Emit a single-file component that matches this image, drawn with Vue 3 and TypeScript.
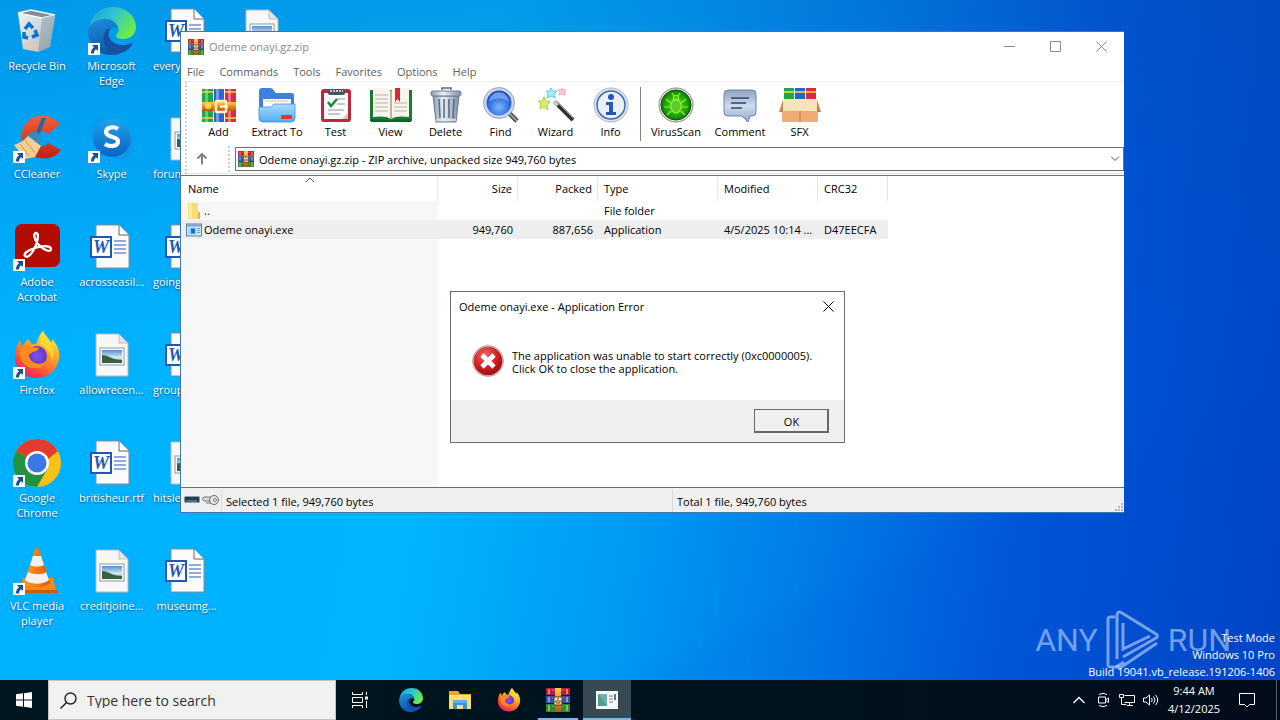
<script setup lang="ts">
import { ref } from 'vue'

interface Shortcut {
  icon: string
  label: string
  linked?: boolean
  left?: boolean
}

interface Tool {
  icon: string
  label: string
  size?: string
}

const shortcuts: Shortcut[][] = [
  [
    { icon: 'bin', label: 'Recycle Bin' },
    { icon: 'ccleaner', label: 'CCleaner', linked: true },
    { icon: 'acrobat', label: 'Adobe Acrobat', linked: true },
    { icon: 'firefox', label: 'Firefox', linked: true },
    { icon: 'chrome', label: 'Google Chrome', linked: true },
    { icon: 'vlc', label: 'VLC media player', linked: true },
  ],
  [
    { icon: 'edge', label: 'Microsoft Edge', linked: true },
    { icon: 'skype', label: 'Skype', linked: true },
    { icon: 'word', label: 'acrosseasil...' },
    { icon: 'photo', label: 'allowrecen...' },
    { icon: 'word', label: 'britisheur.rtf' },
    { icon: 'photo', label: 'creditjoine...' },
  ],
  [
    { icon: 'word', label: 'every...', left: true },
    { icon: 'photo', label: 'forum...', left: true },
    { icon: 'word', label: 'going...', left: true },
    { icon: 'word', label: 'group...', left: true },
    { icon: 'photo', label: 'hitsle...', left: true },
    { icon: 'word', label: 'museumg...' },
  ],
  [{ icon: 'photo', label: '' }],
]

const menus = ['File', 'Commands', 'Tools', 'Favorites', 'Options', 'Help']

const mainTools: Tool[] = [
  { icon: 'add', label: 'Add' },
  { icon: 'extract', label: 'Extract To', size: 'mid' },
  { icon: 'test', label: 'Test' },
  { icon: 'view', label: 'View' },
  { icon: 'delete', label: 'Delete' },
  { icon: 'find', label: 'Find' },
  { icon: 'wizard', label: 'Wizard' },
  { icon: 'info', label: 'Info' },
]

const extraTools: Tool[] = [
  { icon: 'virus', label: 'VirusScan', size: 'wide' },
  { icon: 'comment', label: 'Comment', size: 'wide' },
  { icon: 'sfx', label: 'SFX' },
]

const pinned = [
  { icon: 'edge', label: 'Microsoft Edge', state: '' },
  { icon: 'explorer', label: 'File Explorer', state: '' },
  { icon: 'firefox', label: 'Firefox', state: '' },
  { icon: 'rar', label: 'WinRAR', state: 'running' },
  { icon: 'appwin', label: 'Application Error', state: 'active' },
]

const address = ref('Odeme onayi.gz.zip - ZIP archive, unpacked size 949,760 bytes')
const query = ref('')
const errorOpen = ref(true)
</script>

<template>
  <div class="screen">
    <svg class="sprite" aria-hidden="true">
      <defs>
        <linearGradient id="gEdgeTop" x1="0" y1="0" x2="1" y2="0.5">
          <stop offset="0" stop-color="#1b9de2" /><stop offset="0.5" stop-color="#2fc3cf" /><stop offset="1" stop-color="#6bea4d" />
        </linearGradient>
        <linearGradient id="gEdgeLeft" x1="0" y1="0" x2="0.3" y2="1">
          <stop offset="0" stop-color="#1e8fe0" /><stop offset="1" stop-color="#0c59a4" />
        </linearGradient>
        <linearGradient id="gFire" x1="0.8" y1="0" x2="0.2" y2="1">
          <stop offset="0" stop-color="#fff14f" /><stop offset="0.4" stop-color="#ffa028" /><stop offset="0.75" stop-color="#ff4b3a" /><stop offset="1" stop-color="#e31587" />
        </linearGradient>
        <radialGradient id="gFireCore">
          <stop offset="0" stop-color="#8b4df0" /><stop offset="1" stop-color="#5a3cc0" />
        </radialGradient>
        <linearGradient id="gBin" x1="0" y1="0" x2="1" y2="1">
          <stop offset="0" stop-color="#eef3f6" /><stop offset="0.6" stop-color="#c6cfd5" /><stop offset="1" stop-color="#9faab2" />
        </linearGradient>
        <linearGradient id="gSkype" x1="0" y1="0" x2="0" y2="1">
          <stop offset="0" stop-color="#1fa3ea" /><stop offset="1" stop-color="#0a63c6" />
        </linearGradient>
        <linearGradient id="gCc" x1="0" y1="0" x2="0" y2="1">
          <stop offset="0" stop-color="#f2603c" /><stop offset="1" stop-color="#c3200f" />
        </linearGradient>
        <linearGradient id="gSky" x1="0" y1="0" x2="0" y2="1">
          <stop offset="0" stop-color="#4f8fd6" /><stop offset="0.6" stop-color="#d8ecf7" /><stop offset="1" stop-color="#2f6d6a" />
        </linearGradient>
        <linearGradient id="gGold" x1="0" y1="0" x2="0" y2="1">
          <stop offset="0" stop-color="#ffd24a" /><stop offset="0.5" stop-color="#e88a1c" /><stop offset="1" stop-color="#b9560c" />
        </linearGradient>
        <linearGradient id="gFolder" x1="0" y1="0" x2="0" y2="1">
          <stop offset="0" stop-color="#a9dcff" /><stop offset="1" stop-color="#52acf2" />
        </linearGradient>
        <linearGradient id="gSteel" x1="0" y1="0" x2="1" y2="0">
          <stop offset="0" stop-color="#8797ab" /><stop offset="0.4" stop-color="#edf2f7" /><stop offset="1" stop-color="#7b8ca2" />
        </linearGradient>
        <radialGradient id="gLens" cx="0.5" cy="0.65" r="0.6">
          <stop offset="0" stop-color="#7db4ff" /><stop offset="0.6" stop-color="#3470e0" /><stop offset="1" stop-color="#1a45b8" />
        </radialGradient>
        <radialGradient id="gVirus">
          <stop offset="0" stop-color="#5fe000" /><stop offset="0.6" stop-color="#2bb00d" /><stop offset="1" stop-color="#0f7a08" />
        </radialGradient>
        <linearGradient id="gBubble" x1="0" y1="0" x2="0" y2="1">
          <stop offset="0" stop-color="#8ea3c6" /><stop offset="0.5" stop-color="#cfdbee" /><stop offset="1" stop-color="#95a9cc" />
        </linearGradient>
        <radialGradient id="gError" cx="0.4" cy="0.3" r="0.8">
          <stop offset="0" stop-color="#ee6a66" /><stop offset="0.6" stop-color="#c8191c" /><stop offset="1" stop-color="#8e0b10" />
        </radialGradient>
        <linearGradient id="gCone" x1="0" y1="0" x2="1" y2="0">
          <stop offset="0" stop-color="#ff9a2e" /><stop offset="0.5" stop-color="#f47b0c" /><stop offset="1" stop-color="#d65b00" />
        </linearGradient>
      </defs>

      <symbol id="bin" viewBox="0 0 48 48">
        <path d="M5 6 42 9 37 40 25 45 10 42Z" fill="url(#gBin)" />
        <path d="M5 6 18 3 42 8 29 11Z" fill="#7f8d97" stroke="#f4f8fa" stroke-width="1.4" />
        <path d="M29 11 42 8 37 40 25 45Z" fill="#8797a3" opacity=".5" />
        <path d="M11 36 25 37 25 44 11 41Z" fill="#e5c9b8" opacity=".7" />
        <g fill="none" stroke="#1274c4" stroke-width="3.6"><path d="M12 22l4-5 4 4" /><path d="M22 23l2 5-5 2" /><path d="M15 31l-4-1v-5" /></g>
      </symbol>
      <symbol id="edge" viewBox="0 0 48 48">
        <path d="M1 22C2 9 12 0 25 0c14 0 23 10 23 20 0 8-6 12-13 12-5 0-8-2-7-4 3-3 3-5 2-8-2-6-8-9-15-8C8 13 3 17 1 22Z" fill="url(#gEdgeTop)" />
        <path d="M0 24c1-7 8-12 16-12 8 0 13 5 14 10-2-2-5-2-7-1-6 4-6 14 0 20 3 3 6 5 9 6-3 1-6 1-9 1C9 48 0 37 0 24Z" fill="url(#gEdgeLeft)" />
        <path d="M18 23c-5 8-2 19 7 23 8 2 15-2 19-8 1-2 0-2-1-2-5 3-13 3-18-1-5-4-6-9-2-14-2 0-4 1-5 2Z" fill="#1750a3" />
      </symbol>
      <symbol id="ccleaner" viewBox="0 0 48 48">
        <path d="M47 9C36-4 14-2 9 16c-4 17 12 30 26 27 6-1 10-4 13-8l-13-7c-3 5-10 4-12-1-3-8 6-15 12-8Z" fill="url(#gCc)" />
        <path d="M29 3h4l-8 20-4-1Z" fill="#1e68a6" />
        <path d="M12 23c4-7 10-8 15-4l1 8-8 3Z" fill="#3c88bd" />
        <path d="M15 21 28 31 22 42 12 44 1 30c6-2 11-5 14-9Z" fill="#f2cf92" />
        <path d="M12 25 22 38M7 29l9 12" stroke="#c99450" stroke-width="1" />
      </symbol>
      <symbol id="acrobat" viewBox="0 0 48 48">
        <rect x="2" y="1" width="45" height="43" rx="7" fill="#b30b00" />
        <path d="M12 33c-2-2 3-6 10-8 9-3 16-2 16 1 0 4-8 1-13-5-4-5-5-11-2-11 4 0 1 12-3 18-3 5-6 7-8 5Z" fill="none" stroke="#fff" stroke-width="2.3" />
      </symbol>
      <symbol id="firefox" viewBox="0 0 48 48">
        <path d="M30 0c2 5 6 8 8 12 1-1 1-3 1-4 6 6 8 13 7 20-2 11-11 19-22 19C11 47 2 38 2 26 2 18 4 14 7 9l2 6 6-7 4 5h4c2-5 3-9 7-13Z" fill="url(#gFire)" />
        <circle cx="24" cy="25" r="10" fill="url(#gFireCore)" />
        <path d="M7 18c4-4 9-4 12-2 3 1 5 0 7 1-1 4-8 3-10 7 0 8 12 13 19 4-1 11-20 13-26 2-2-4-3-8-2-12Z" fill="#ff8a1d" />
        <path d="M30 0c2 5 15 13 9 29-1-8-6-13-12-16 0-5 1-9 3-13Z" fill="#ffe12f" opacity=".75" />
      </symbol>
      <symbol id="chrome" viewBox="0 0 48 48">
        <circle cx="24" cy="24" r="24" fill="#fbc116" />
        <path d="M24 24 3.2 12A24 24 0 0 1 44.8 12Z" fill="#e33b2e" />
        <path d="M24 24 3.2 12A24 24 0 0 0 24 48L35 29Z" fill="#229342" />
        <path d="M24 12H45L35 20Z" fill="#e33b2e" />
        <circle cx="24" cy="24" r="12" fill="#fff" /><circle cx="24" cy="24" r="9.5" fill="#3b78e7" />
      </symbol>
      <symbol id="vlc" viewBox="0 0 48 48">
        <path d="M10 31h30l4 15H5Z" fill="#f5881a" /><path d="M5 43h39l1 3H4Z" fill="#c95d05" />
        <path d="M22 2q2-2 4 0l11 34c-6 6-20 6-26 0Z" fill="url(#gCone)" />
        <path d="M20 9h8l3 9c-4 2-10 2-14 0ZM15 25c5 3 14 3 18 0l3 8c-6 5-18 5-24 0Z" fill="#f1f1ee" />
      </symbol>
      <symbol id="skype" viewBox="0 0 48 48">
        <circle cx="16" cy="16" r="13" fill="#0b9aea" /><circle cx="33" cy="32" r="12" fill="#0f97ea" />
        <circle cx="24" cy="23" r="19" fill="url(#gSkype)" />
        <path d="M30 14c-4-3-12-2-12 3 0 6 12 4 12 9 0 6-9 6-13 3" fill="none" stroke="#fff" stroke-width="4.2" />
      </symbol>
      <symbol id="word" viewBox="0 0 48 48">
        <path d="M8 2H31L41 12V45H8Z" fill="#fbfbfb" stroke="#888d94" /><path d="M31 2V12H41" fill="#fff" stroke="#666" />
        <path d="M26 18h12M26 22h12M26 26h12M26 30h12" stroke="#2a5dba" stroke-width="1.2" />
        <rect x="3" y="14" width="20" height="20" fill="#fff" stroke="#1f56b8" stroke-width="2" />
        <text x="13" y="30" text-anchor="middle" class="glyph-w">W</text>
      </symbol>
      <symbol id="photo" viewBox="0 0 48 48">
        <path d="M8 3H31L40 12V45H8Z" fill="#f7f7f7" stroke="#b3b7bb" /><path d="M31 3V12H40Z" fill="#dfe5e8" stroke="#a9adb1" stroke-width=".7" />
        <rect x="12" y="17" width="24" height="17" fill="#fff" stroke="#8899a5" />
        <rect x="14" y="19" width="20" height="13" fill="url(#gSky)" /><path d="M14 24c6 0 10 5 20 5v3H14Z" fill="#35623e" />
      </symbol>
      <symbol id="link" viewBox="0 0 12 12">
        <path d="M0 0H12V12H0Z" fill="#fff" /><path d="M4 2h6v6L8 6.300C6.500 7.500 6 9 6 10.500H3C2.800 8 4 5.800 6 4.200Z" fill="#1b4f93" />
      </symbol>

      <symbol id="rar" viewBox="0 0 24 24">
        <path d="M0 0h24v7H0Z" fill="#b81c44" /><path d="M0 8h24v7H0Z" fill="#2b55bd" /><path d="M0 16h24v8H0Z" fill="#278c38" />
        <path d="M0 7h24v1H0ZM0 15h24v1H0Z" fill="#2b0f28" />
        <path d="M3 1v5M3 9v5M3 17v6M21 1v5M21 9v5M21 17v6" stroke="#d7ba47" stroke-width="1.500" /><path d="M6 2h12M6 10h12M6 18h12" stroke="#ffffff" opacity=".35" />
        <rect x="9" width="6" height="24" fill="url(#gGold)" /><rect x="8" y="9" width="8" height="8" fill="#fff6cf" stroke="#5d2a08" /><path d="M10 12v3h4v-3M12 10v4" stroke="#6b2f0b" fill="none" />
      </symbol>
      <symbol id="add" viewBox="0 0 36 36">
        <path d="M1 2h11v33H1Z" fill="#1ea548" /><path d="M13 2h10v33H13Z" fill="#2c66d2" /><path d="M24 2h11v33H24Z" fill="#db2a48" />
        <path d="M4 2h3v33H4ZM15 2h3v33h-3ZM27 2h3v33h-3Z" fill="#fff" opacity=".35" />
        <path d="M1 5h11M24 5h11M1 31h11M24 31h11" stroke="#f4d53d" stroke-width="1.5" />
        <rect x="1" y="15" width="34" height="9" rx="1" fill="url(#gGold)" /><rect x="15" y="14" width="10" height="11" rx="1" fill="none" stroke="#fff0c8" stroke-width="2.500" /><path d="M19 19.500h8" stroke="#fff" stroke-width="2" />
        <circle cx="7" cy="19" r="3" fill="#ffd757" />
      </symbol>
      <symbol id="extract" viewBox="0 0 40 36">
        <path d="M2 33V4q0-3 3-3h8q3 0 4 3l2 2h16q2 0 2 3v24Z" fill="#3f7fdd" /><path d="M6 12h28v10H6Z" fill="#fff" />
        <path d="M8 14h24" stroke="#efc37c" stroke-width="1.5" stroke-dasharray="2 1" />
        <path d="M2 20h12l3-3h21v14q0 4-4 4H6q-4 0-4-4Z" fill="url(#gFolder)" stroke="#3d8ddb" stroke-width=".8" />
        <rect x="24" y="28" width="11" height="4" rx="1" fill="#d9363a" />
      </symbol>
      <symbol id="test" viewBox="0 0 36 36">
        <rect x="3" y="2" width="30" height="33" rx="3" fill="#c3263c" /><path d="M6 6h24v26H6Z" fill="#fafafa" /><path d="M24 32l6-6v6Z" fill="#c9c9c9" />
        <rect x="10" y="2" width="17" height="6" rx="2" fill="#4c5259" /><path d="M12 4h13" stroke="#eceff1" stroke-width="1.500" stroke-dasharray="2 1" />
        <path d="M10 15l3 4 6-7" fill="none" stroke="#178a37" stroke-width="2.500" /><path d="M19 12h8M19 17h8M10 23h16M10 27h12" stroke="#8a93ab" stroke-width="1.200" />
      </symbol>
      <symbol id="view" viewBox="0 0 44 36">
        <path d="M1 3h42v31H1Z" fill="#187b34" /><path d="M4 2c7-2 14-1 18 2 4-3 11-4 18-2v28c-7-1-14-1-18 2-4-3-11-3-18-2Z" fill="#f8f4e9" /><path d="M22 4v28" stroke="#a99f8b" stroke-width="1.500" />
        <path d="M6 8h13M6 12h13M6 16h13M6 20h13M6 24h13M25 16h13M25 20h13M25 24h13" stroke="#b7b3a8" /><path d="M26 1h5v14l-2.500-3-2.500 3Z" fill="#d12b3c" /><path d="M2 32q20 0 20 2 0-2 20-2v3H2Z" fill="#12602a" />
      </symbol>
      <symbol id="delete" viewBox="0 0 36 36">
        <path d="M5 9h26l-3 26H8Z" fill="url(#gSteel)" stroke="#6b7c93" /><path d="M11 12l1 19M16 12v19M21 12v19M26 12l-1 19" stroke="#5b6d84" stroke-width="1.6" />
        <rect x="3" y="4" width="30" height="5" rx="2" fill="url(#gSteel)" stroke="#6a7b92" /><path d="M14 3V1h9v2" fill="none" stroke="#5b6b80" stroke-width="1.500" /><path d="M8 33h20" stroke="#dfe7ee" stroke-width="1.500" />
      </symbol>
      <symbol id="find" viewBox="0 0 36 36">
        <path d="M25 25l9 9" stroke="#50555e" stroke-width="5" /><path d="M25 25l9 9" stroke="#a9b0bb" stroke-width="1.500" />
        <circle cx="16" cy="16" r="14" fill="url(#gLens)" stroke="#cbd6e9" stroke-width="3" /><circle cx="16" cy="16" r="15.500" fill="none" stroke="#788aaa" stroke-width=".7" />
        <path d="M6 15C8 2 24 2 26 15c-6-5-14-5-20 0Z" fill="#9bc3ff" opacity=".6" />
      </symbol>
      <symbol id="wizard" viewBox="0 0 36 36">
        <path d="M17 15l18 18" stroke="#303236" stroke-width="4" /><path d="M16 14l4 4" stroke="#c8c8c8" stroke-width="4" /><path d="M19 15l16 16" stroke="#909397" />
        <path d="M6 10l2 4 4 1-3 3 1 5-4-3-4 2 1-5-3-3h4Z" fill="#d8ef6e" stroke="#9fd43a" /><path d="M13 1l2 3h4l-3 3 1 4-4-2-4 2 1-4-2-3h4Z" fill="#a4ecf7" stroke="#5ecde2" /><path d="M24 1l1 2h3l-2 2 1 3-3-1-3 1 1-3-2-2h3Z" fill="#fcc" stroke="#f48d96" stroke-width=".7" />
      </symbol>
      <symbol id="info" viewBox="0 0 36 36">
        <circle cx="18" cy="18" r="17" fill="#dbe4f1" stroke="#a8b6cd" /><circle cx="18" cy="18" r="14" fill="#e9f0fc" stroke="#4366ae" stroke-width="1.500" />
        <circle cx="18" cy="10" r="3" fill="#2053b8" /><path d="M13 15h7v10h3v3H13v-3h3v-7h-3Z" fill="#2456be" />
      </symbol>
      <symbol id="virus" viewBox="0 0 36 36">
        <circle cx="18" cy="18" r="17" fill="#e2e7e2" stroke="#7c8c7c" /><circle cx="18" cy="18" r="15" fill="url(#gVirus)" stroke="#0b4a0a" />
        <g fill="none" stroke="#93f23d" stroke-width="1.200"><ellipse cx="18" cy="19" rx="5" ry="7" fill="#60c92b" /><circle cx="18" cy="11" r="2.500" /><path d="M13 16l-5-4M12 20H6M13 24l-4 4M23 16l5-4M24 20h6M23 24l4 4M16 9l-2-3M20 9l2-3" /></g>
      </symbol>
      <symbol id="comment" viewBox="0 0 36 36">
        <path d="M6 3h24q4 0 4 4v18q0 4-4 4h-2l-2 6-6-6H6q-4 0-4-4V7q0-4 4-4Z" fill="url(#gBubble)" stroke="#71849f" /><path d="M9 11h18M9 16h15M9 21h11" stroke="#34465f" stroke-width="1.6" />
      </symbol>
      <symbol id="sfx" viewBox="0 0 44 36">
        <path d="M6 1h10v14H6Z" fill="#21a64d" /><path d="M17 1h10v14H17Z" fill="#2564ce" /><path d="M28 1h10v14H28Z" fill="#dc2942" /><path d="M6 5h10M17 5h10M28 5h10" stroke="#f1df45" stroke-width="1.5" />
        <path d="M4 19h36v16H4Z" fill="#eeab78" /><path d="M5 12h34l2 12H3Z" fill="#f8e3b4" /><path d="M5 13 1 25h4ZM39 13l4 12h-4Z" fill="#c98253" /><path d="M22 24v11" stroke="#bf7643" />
      </symbol>

      <symbol id="folder" viewBox="0 0 16 16"><path d="M2 0h10v9l2 2v5H2Z" fill="#f8dc74" /><path d="M12 9v7h2V9Z" fill="#e3b83f" /><path d="M3 1h3v14H3Z" fill="#fdeea4" /></symbol>
      <symbol id="exe" viewBox="0 0 16 13"><rect x=".5" y=".5" width="15" height="12" fill="#cfe7fb" stroke="#5a7e9f" /><path d="M1 1h14v2H1Z" fill="#7fa5c6" /><path d="M2 4h8v7H2Z" fill="#a6d2f4" /><path d="M5 5h4v5H5Z" fill="#1371cd" /><path d="M11 5h3M11 7h3M11 9h3" stroke="#6aa0ce" /></symbol>
      <symbol id="explorer" viewBox="0 0 24 24"><path d="M1 3h9l2 3h11v15H1Z" fill="#e9a820" /><path d="M1 7h22v14H1Z" fill="#fbdc78" /><path d="M5 21v-8h14v8h-4v-4H9v4Z" fill="#3d95d8" /><path d="M5 12h14v3H5Z" fill="#5cb1e8" /></symbol>
      <symbol id="appwin" viewBox="0 0 24 24"><path d="M1 3h22v18H1Z" fill="#f6f8f7" /><path d="M3 6h9v12H3Z" fill="#4f9d8f" /><path d="M3 6h9v12Z" fill="#6fb3a6" /><path d="M14 8h4M14 11h4M14 14h4" stroke="#9fa8a8" stroke-width="1.500" /><path d="M20 6v6" stroke="#34495e" stroke-width="1.500" /></symbol>
      <symbol id="error" viewBox="0 0 32 32"><circle cx="16" cy="16" r="15.500" fill="#d9c9c9" stroke="#9c7c7c" stroke-width=".6" /><circle cx="16" cy="16" r="14.300" fill="url(#gError)" /><path d="M10 10l12 12M22 10 10 22" stroke="#fff" stroke-width="4.600" /></symbol>
    </svg>

    <main class="desktop">
      <div class="shortcuts">
        <ul v-for="(column, c) in shortcuts" :key="c" class="column">
          <li v-for="(item, i) in column" :key="i" :class="['shortcut', { left: item.left }]">
            <span class="picture">
              <svg class="big"><use :href="`#${item.icon}`" /></svg>
              <svg v-if="item.linked" class="arrow"><use href="#link" /></svg>
            </span>
            <span class="label">{{ item.label }}</span>
          </li>
        </ul>
      </div>

      <div class="watermark" aria-label="ANY RUN">
        <span>ANY</span>
        <svg viewBox="0 0 54 62" class="play"><g fill="none" stroke="currentColor" stroke-width="3"><path d="M9 8H4q-2 0-2 2v46q0 2 4 2h4l8-5" /><path d="M11 50V7q0-6 5-3l34 21q3 2 0 4L17 48" /><path d="M17 14v26l27-13" /><path d="M11 56q1 5 6 1l34-23" /></g></svg>
        <span>RUN</span>
      </div>
      <div class="build">
        <p>Test Mode</p>
        <p>Windows 10 Pro</p>
        <p>Build 19041.vb_release.191206-1406</p>
      </div>

      <section class="window" aria-label="Odeme onayi.gz.zip">
        <header class="titlebar">
          <svg class="small"><use href="#rar" /></svg>
          <h1>Odeme onayi.gz.zip</h1>
          <button class="caption" aria-label="Minimize"><svg viewBox="0 0 11 11"><path d="M0 5.500h11" /></svg></button>
          <button class="caption" aria-label="Maximize"><svg viewBox="0 0 11 11"><path d="M.5.5h10v10H.5Z" /></svg></button>
          <button class="caption" aria-label="Close"><svg viewBox="0 0 11 11"><path d="M.5.5l10 10M10.500.5l-10 10" /></svg></button>
        </header>
        <nav class="menu">
          <button v-for="m in menus" :key="m">{{ m }}</button>
        </nav>
        <div class="bars">
          <div class="toolbar">
            <button v-for="t in mainTools" :key="t.icon" :class="['tool', t.size]">
              <svg><use :href="`#${t.icon}`" /></svg>{{ t.label }}
            </button>
            <span class="rule"></span>
            <button v-for="t in extraTools" :key="t.icon" :class="['tool', t.size]">
              <svg><use :href="`#${t.icon}`" /></svg>{{ t.label }}
            </button>
          </div>
          <div class="location">
            <button class="up" aria-label="Up one level"><svg viewBox="0 0 12 12"><path d="M6 11.500V1M1.500 5.500 6 1l4.500 4.500" /></svg></button>
            <div class="address">
              <svg class="small"><use href="#rar" /></svg>
              <input v-model="address" aria-label="Address" />
              <button class="drop" aria-label="Show locations"><svg viewBox="0 0 8 6"><path d="M0 .5 4 4.500 8 .5" /></svg></button>
            </div>
          </div>
        </div>
        <div class="list">
          <table>
            <colgroup>
              <col class="c-name" /><col class="c-num" /><col class="c-num" /><col class="c-type" /><col class="c-date" /><col class="c-crc" />
            </colgroup>
            <thead>
              <tr>
                <th>Name<svg class="sort" viewBox="0 0 8 5"><path d="M0 4.500 4 .5 8 4.500" /></svg></th>
                <th class="num">Size</th>
                <th class="num">Packed</th>
                <th>Type</th>
                <th>Modified</th>
                <th>CRC32</th>
              </tr>
            </thead>
            <tbody>
              <tr>
                <td class="name"><div><svg><use href="#folder" /></svg>..</div></td>
                <td></td><td></td><td>File folder</td><td></td><td></td>
              </tr>
              <tr class="selected">
                <td class="name"><div><svg><use href="#exe" /></svg>Odeme onayi.exe</div></td>
                <td class="num">949,760</td><td class="num">887,656</td><td>Application</td><td>4/5/2025 10:14 ...</td><td>D47EECFA</td>
              </tr>
            </tbody>
          </table>
        </div>
        <footer class="status">
          <span class="marks">
            <svg viewBox="0 0 36 12"><rect x=".5" y="2.500" width="15" height="6" rx="1" fill="#243b53" stroke="#8c9aa6" /><path d="M2 7h11" stroke="#6ea5bd" /><path d="M20 3h8v4h-8l-2-2ZM22 9h6" fill="#ddd" stroke="#777" /><circle cx="30" cy="6" r="4.500" fill="#e5e5e5" stroke="#666" /><circle cx="31" cy="6" r="1.500" fill="#fff" stroke="#777" /></svg>
          </span>
          <span class="chosen">Selected 1 file, 949,760 bytes</span>
          <span class="total">Total 1 file, 949,760 bytes</span>
          <svg class="grip" viewBox="0 0 9 9"><path d="M6 0h2v2H6ZM3 3h2v2H3ZM6 3h2v2H6ZM0 6h2v2H0ZM3 6h2v2H3ZM6 6h2v2H6Z" /></svg>
        </footer>
      </section>

      <section v-if="errorOpen" class="dialog" role="alertdialog" aria-labelledby="error-title">
        <header>
          <h2 id="error-title">Odeme onayi.exe - Application Error</h2>
          <button aria-label="Close" @click="errorOpen = false"><svg viewBox="0 0 11 11"><path d="M.5.5l10 10M10.500.5l-10 10" /></svg></button>
        </header>
        <div class="message">
          <svg><use href="#error" /></svg>
          <p>The application was unable to start correctly (0xc0000005).<br />Click OK to close the application.</p>
        </div>
        <div class="actions"><button @click="errorOpen = false">OK</button></div>
      </section>
    </main>

    <footer class="taskbar">
      <button class="start" aria-label="Start"><svg viewBox="0 0 16 16"><path d="M0 2.300 7 1.300V7.500H0ZM8 1.200 16 0V7.500H8ZM0 8.500H7V14.700L0 13.700ZM8 8.500H16V16L8 14.800Z" /></svg></button>
      <label class="search">
        <svg viewBox="0 0 17 17"><circle cx="10.500" cy="6.500" r="5.500" /><path d="M6.500 10.500.5 16.500" /></svg>
        <input v-model="query" type="text" placeholder="Type here to search" aria-label="Search" />
      </label>
      <div class="tasks">
        <button class="task" aria-label="Task View">
          <svg class="taskview" viewBox="0 0 16 16"><path d="M.5 0v2.500h10V0M.5 16v-2.500h10V16M.5 5.500h10v5H.5ZM14.500 0v3M14.500 9v7" /><path d="M13 4.500h3v3h-3Z" class="solid" /></svg>
        </button>
        <div class="apps">
          <button v-for="p in pinned" :key="p.icon" :class="['task', p.state]" :aria-label="p.label">
            <svg class="app"><use :href="`#${p.icon}`" /></svg>
          </button>
        </div>
      </div>
      <div class="tray">
        <button aria-label="Hidden icons"><svg viewBox="0 0 16 16"><path d="M2.500 11 8 5.500l5.500 5.500" stroke-width="1.400" /></svg></button>
        <button aria-label="Camera"><svg viewBox="0 0 16 16"><path d="M3.500 5h7v6h-7ZM10.500 8l3-2v4.500l-3-2M4 2.500q4-2.500 8 0M4 13.500q4 2.500 8 0" /></svg></button>
        <button aria-label="Network"><svg viewBox="0 0 16 16"><path d="M5.500 3.500h10v7h-10M8 13.500h6M10.500 10.500v3M.5 2.500h4v3h-4ZM2.500 5.500v7h5" /></svg></button>
        <button aria-label="Volume"><svg viewBox="0 0 16 16"><path d="M.5 6v4h2.500l3.500 3V3L3 6ZM8.500 6q1.500 2 0 4M10.500 4.500q3 3.500 0 7M12.500 3q4.500 5 0 10" /></svg></button>
      </div>
      <div class="clock"><span>9:44 AM</span><span>4/12/2025</span></div>
      <button class="notes" aria-label="Notifications"><svg viewBox="0 0 16 16"><path d="M.5 1.500h15v11h-5l-2.500 2.500-2.500-2.500h-5Z" /></svg></button>
    </footer>
  </div>
</template>

<style>
body {
  margin: 0;
}
</style>

<style scoped>
.screen {
  display: flex;
  flex-direction: column;
  min-height: 100vh;
  font: 11px/15px "Open Sans", "Noto Sans", sans-serif;
  color: #000;
}
.sprite {
  position: absolute;
  width: 0;
  height: 0;
}
button,
input {
  font: inherit;
  color: inherit;
  background: none;
  border: 0;
  padding: 0;
  margin: 0;
}
h1,
h2,
p,
ul {
  margin: 0;
  padding: 0;
  font: inherit;
  list-style: none;
}
svg {
  flex: none;
  display: block;
}
.small {
  width: 16px;
  height: 16px;
}

.desktop {
  position: relative;
  flex: 1;
  background:
    linear-gradient(155deg, transparent 75%, rgba(0, 60, 200, 0.06) 78%, rgba(0, 70, 210, 0.02) 100%),
    linear-gradient(to bottom, rgba(10, 70, 160, 0.22), rgba(0, 100, 220, 0) 50%),
    linear-gradient(100deg, #00b0ff 0%, #00b4ff 36%, #009ef6 50%, #007ce8 65%, #0056d8 80%, #0044c4 100%);
}
.shortcuts {
  display: flex;
}
.column {
  width: 75px;
}
.column:first-child {
  width: 74px;
}
.shortcut {
  display: flex;
  flex-direction: column;
  align-items: center;
  gap: 3px;
  height: 101px;
  padding-top: 7px;
}
.picture {
  position: relative;
}
.big {
  width: 48px;
  height: 48px;
}
.arrow {
  position: absolute;
  left: 0;
  bottom: 0;
  width: 12px;
  height: 12px;
}
.label {
  padding: 0 4px;
  text-align: center;
  color: #fff;
  text-shadow: 0 1px 2px rgba(0, 30, 80, 0.75);
}
.left .label {
  align-self: flex-start;
}
.glyph-w {
  font: italic bold 18px "Liberation Serif", serif;
  fill: #1f56b8;
}

.watermark {
  position: absolute;
  right: 49px;
  bottom: 9px;
  display: flex;
  align-items: center;
  gap: 8px;
  font: 32px/62px "Liberation Sans Narrow", Roboto, sans-serif;
  color: rgba(190, 215, 250, 0.62);
}
.play {
  width: 54px;
  height: 62px;
}
.build {
  position: absolute;
  right: 5px;
  bottom: 0;
  text-align: right;
  line-height: 17px;
  color: #fff;
}

.window {
  position: absolute;
  top: 31px;
  right: 156px;
  bottom: 167px;
  left: 180px;
  display: flex;
  flex-direction: column;
  box-sizing: border-box;
  border: 1px solid #3f78ae;
  border-right-width: 0;
  background: #fff;
}
.titlebar {
  display: flex;
  align-items: center;
  height: 29px;
  padding-left: 7px;
  color: #8a8a8a;
}
.titlebar h1 {
  flex: 1;
  padding-left: 5px;
}
.caption {
  display: grid;
  place-items: center;
  width: 46px;
  height: 28px;
}
.caption svg,
.dialog header svg {
  width: 11px;
  height: 11px;
  fill: none;
  stroke: currentColor;
}
.menu {
  display: flex;
  gap: 15px;
  height: 20px;
  padding-left: 6px;
  color: #606060;
  border-bottom: 1px solid #ececec;
}
.bars {
  margin-left: 4px;
  border-left: 2px dotted #d5cccc;
}
.toolbar {
  display: flex;
  height: 64px;
  padding-left: 4px;
}
.tool {
  display: flex;
  flex-direction: column;
  align-items: center;
  gap: 1px;
  width: 55px;
  padding-top: 5px;
}
.tool.mid {
  width: 62px;
}
.tool.wide {
  width: 64px;
}
.tool svg {
  width: 44px;
  height: 36px;
}
.rule {
  width: 1px;
  height: 54px;
  margin: 5px 3px 0 2px;
  background: #808080;
}
.location {
  display: flex;
  height: 27px;
  border-bottom: 1px solid #e3e3e3;
}
.up {
  display: grid;
  place-items: center;
  width: 30px;
  height: 26px;
  padding-right: 11px;
  box-sizing: content-box;
  border-right: 2px dotted #d5cccc;
}
.up svg {
  width: 12px;
  height: 12px;
  fill: none;
  stroke: #808080;
  stroke-width: 2;
}
.address {
  display: flex;
  flex: 1;
  align-items: center;
  height: 22px;
  margin: 1px 0 0 5px;
  padding-left: 2px;
  border: 1px solid #707070;
}
.address input {
  flex: 1;
  min-width: 0;
  padding-left: 5px;
  outline: 0;
}
.drop {
  padding: 8px 4px;
}
.drop svg,
.sort {
  width: 8px;
  height: 6px;
  fill: none;
  stroke: #555;
}
.list {
  flex: 1;
  margin-top: 1px;
  border-top: 1px solid #707070;
  border-bottom: 1px solid #707070;
  background: linear-gradient(#fff, #fff) 0 0 / 100% 25px no-repeat, linear-gradient(#f7f7f7, #f7f7f7) 0 0 / 257px 100% no-repeat;
}
table {
  width: 707px;
  table-layout: fixed;
  border-collapse: separate;
  border-spacing: 0;
}
.c-name {
  width: 257px;
}
.c-num {
  width: 80px;
}
.c-type {
  width: 120px;
}
.c-date {
  width: 100px;
}
.c-crc {
  width: 70px;
}
th {
  position: relative;
  height: 25px;
  padding: 0 5px 0 6px;
  font-weight: normal;
  text-align: left;
  border-right: 1px solid #e5e5e5;
}
th:first-child {
  padding-left: 7px;
}
.sort {
  position: absolute;
  top: 1px;
  left: 125px;
}
td {
  height: 19px;
  padding: 0 5px 0 6px;
  white-space: nowrap;
}
th.num,
td.num {
  text-align: right;
}
td.name {
  padding: 0 5px;
}
.name div {
  display: flex;
  align-items: center;
  gap: 2px;
}
.name svg {
  width: 16px;
  height: 16px;
}
.selected {
  background: #eee;
}
.status {
  display: flex;
  align-items: stretch;
  height: 22px;
  padding-top: 2px;
  line-height: 23px;
  background: #f0f0f0;
}
.status > span {
  box-sizing: border-box;
  padding-left: 4px;
}
.marks {
  width: 41px;
  border-right: 1px solid #d8d8d8;
}
.status .marks svg {
  width: 36px;
  height: 12px;
  margin-top: 4px;
}
.status > .marks {
  padding-left: 3px;
}
.chosen {
  flex: 1;
  border-right: 1px solid #d8d8d8;
}
.total {
  width: 442px;
}
.grip {
  align-self: flex-end;
  width: 9px;
  height: 9px;
  fill: #b5b5b5;
}

.dialog {
  position: absolute;
  top: 291px;
  left: 450px;
  box-sizing: border-box;
  width: 395px;
  border: 1px solid #6c6c6c;
  background: #fff;
}
.dialog header {
  display: flex;
  align-items: center;
  justify-content: space-between;
  height: 29px;
  padding: 0 10px 0 8px;
}
.message {
  display: flex;
  gap: 8px;
  height: 55px;
  padding: 24px 0 0 21px;
  line-height: 13px;
}
.message svg {
  width: 32px;
  height: 32px;
}
.message p {
  padding-top: 4px;
}
.actions {
  display: flex;
  justify-content: flex-end;
  padding: 9px 15px;
  background: #f0f0f0;
}
.actions button {
  width: 75px;
  height: 24px;
  border: 1px solid #696969;
  box-shadow: inset -1px -1px #696969;
}

.taskbar {
  display: flex;
  height: 40px;
  background: linear-gradient(to right, #001620, #00131f 60%, #020b1a);
  color: #fff;
}
.start {
  display: grid;
  place-items: center;
  width: 48px;
}
.start svg {
  width: 16px;
  height: 16px;
  fill: #fff;
}
.search {
  display: flex;
  align-items: center;
  gap: 10px;
  box-sizing: border-box;
  width: 288px;
  padding-left: 11px;
  border: 1px solid #c3c3c3;
  background: #f1f1f1;
  color: #333;
  font-size: 14px;
}
.search svg {
  width: 17px;
  height: 17px;
  fill: none;
  stroke: #222;
  stroke-width: 1.4;
}
.search input {
  flex: 1;
  min-width: 0;
  outline: 0;
}
.search input::placeholder {
  color: #333;
}
.tasks {
  display: flex;
  gap: 3px;
}
.apps {
  display: flex;
  gap: 1px;
}
.task {
  display: grid;
  place-items: center;
  width: 48px;
  height: 40px;
}
.app {
  width: 24px;
  height: 24px;
}
.taskview {
  width: 16px;
  height: 16px;
  fill: none;
  stroke: #fff;
}
.solid {
  fill: #fff;
  stroke: none;
}
.running {
  background: linear-gradient(#76b9ed, #76b9ed) center bottom / 40px 2px no-repeat;
}
.active {
  background: linear-gradient(#76b9ed, #76b9ed) center bottom / 48px 2px no-repeat, #374a54;
}
.tray {
  display: flex;
  align-items: center;
  gap: 8px;
  margin-left: auto;
}
.tray svg,
.notes svg {
  width: 16px;
  height: 16px;
  fill: none;
  stroke: #fff;
}
.clock {
  display: flex;
  flex-direction: column;
  align-items: center;
  width: 70px;
  padding-top: 2px;
  line-height: 18px;
}
.notes {
  display: grid;
  place-items: center;
  width: 48px;
  margin-right: 3px;
  padding-right: 11px;
  border-right: 1px solid #55606a;
}
</style>
